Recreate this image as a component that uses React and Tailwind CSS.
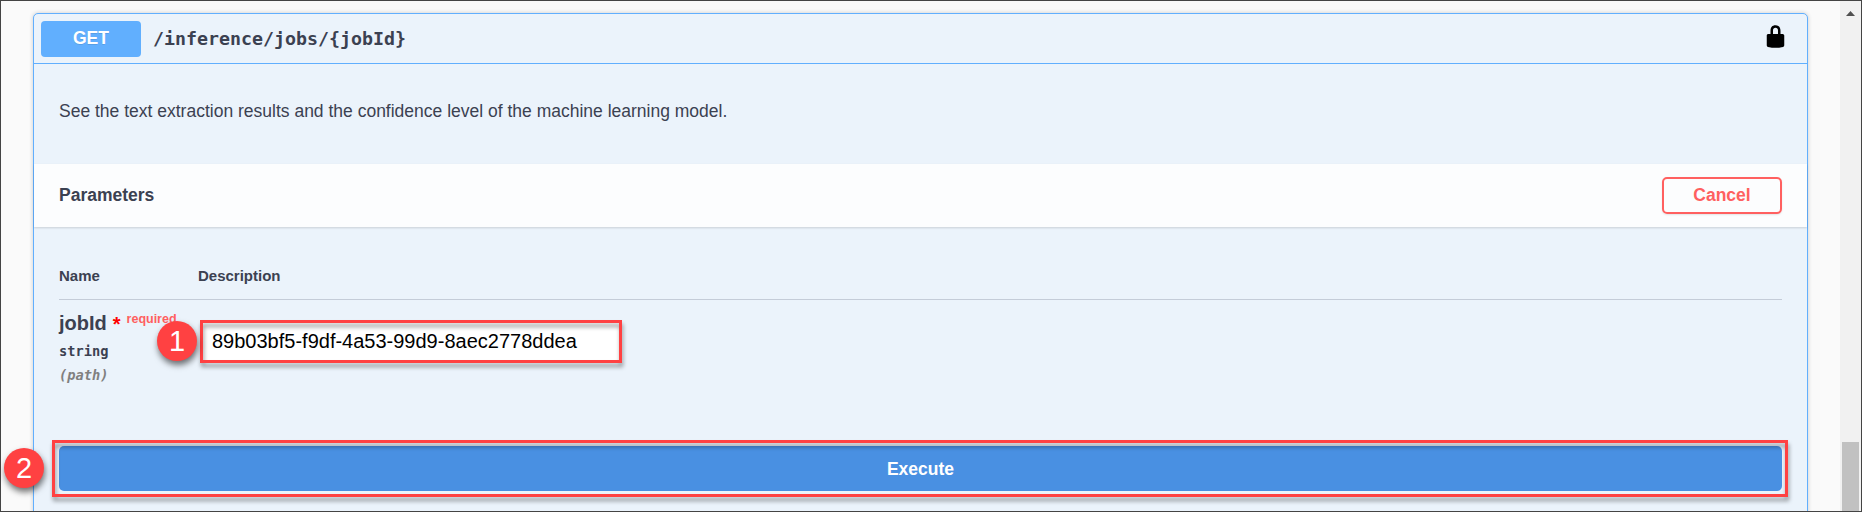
function LockIcon() {
  return (
    <svg className="block h-[25px] w-[25px]" viewBox="0 0 20 20" fill="#000">
      <path d="M15.8 8H14V5.6C14 2.703 12.665 1 10 1 7.334 1 6 2.703 6 5.6V8H4c-.553 0-1 .646-1 1.199V17c0 .549.428 1.139.951 1.307l1.197.387C5.672 18.861 6.55 19 7.1 19h5.8c.549 0 1.428-.139 1.951-.307l1.196-.387c.524-.167.953-.757.953-1.306V9.199C17 8.646 16.352 8 15.8 8zM12 8H8V5.199C8 3.754 8.797 3 10 3c1.203 0 2 .754 2 2.199V8z" />
    </svg>
  );
}

function Marker({ children, className }) {
  return (
    <div
      className={`absolute z-10 flex h-10 w-10 items-center justify-center rounded-full bg-[#ff4142] text-[29px] leading-none font-normal text-white shadow-[1px_4px_6px_rgba(0,0,0,0.55)] ${className}`}
    >
      {children}
    </div>
  );
}

function Highlight({ className }) {
  return (
    <div
      className={`pointer-events-none absolute border-[3px] border-[#ff4142] drop-shadow-[1px_4px_2px_rgba(0,0,0,0.4)] ${className}`}
    />
  );
}

function OperationHeader() {
  return (
    <header className="flex h-[50px] shrink-0 items-start border-b border-[#61affe] pl-[7px] pr-[19px]">
      <div className="mt-[7px] flex h-9 w-[100px] items-center justify-center rounded-[4px] bg-[#61affe] pb-[2px] text-[17.5px] font-bold text-white [text-shadow:0_1px_0_rgba(0,0,0,0.1)]">
        GET
      </div>
      <div className="mt-[12px] ml-[12px] grow font-['DejaVu_Sans_Mono',monospace] text-[18.27px] leading-[25px] font-bold text-[#3b4151]">
        /inference/jobs/&#123;jobId&#125;
      </div>
      <div className="mt-[10px]">
        <LockIcon />
      </div>
    </header>
  );
}

function Parameters() {
  return (
    <div className="flex flex-col px-[25px] pt-[36px]">
      <div className="flex h-[37px] border-b border-[#c4ccd8] text-[15px] leading-[25px] font-bold text-[#3b4151]">
        <div className="w-[139px]">Name</div>
        <div>Description</div>
      </div>
      <div className="flex h-[146px] text-[#3b4151]">
        <div className="w-[139px] shrink-0 pt-[9px]">
          <div className="flex h-[28px] text-[20px] leading-[28px] font-bold">
            <span>jobId</span>
            <span className="ml-[6px] text-[20px] leading-[31px] text-[#ff0000]">*</span>
            <span className="ml-[6px] text-[12.5px] leading-[20px] font-bold text-[#ff5f5f]">required</span>
          </div>
          <div className="mt-[4px] font-['DejaVu_Sans_Mono',monospace] text-[13.7px] leading-[20px] font-bold">string</div>
          <div className="mt-[4px] font-['DejaVu_Sans_Mono',monospace] text-[13.7px] leading-[20px] font-bold text-[#808080] italic">
            (path)
          </div>
        </div>
        <div className="relative mt-[20px] ml-[2px] flex h-[43px] w-[422px] items-center bg-white pb-[2px] pl-[12px] text-[20px] text-black">
          89b03bf5-f9df-4a53-99d9-8aec2778ddea
          <Highlight className="inset-0" />
          <Marker className="top-[1px] left-[-43px]">1</Marker>
        </div>
      </div>
      <div className="relative flex h-[45px] items-center justify-center rounded-[5px] bg-[#4990e2] text-[17.5px] font-bold text-white">
        <span className="pt-px">Execute</span>
        <Highlight className="-left-[7px] -right-[6px] -top-[6px] -bottom-[6px]" />
        <Marker className="top-[2px] left-[-55px]">2</Marker>
      </div>
    </div>
  );
}

function Scrollbar() {
  return (
    <div className="flex w-[21px] shrink-0 flex-col items-center justify-between bg-[#f1f1f1]">
      <svg className="mt-[10px] block h-[5px] w-[9px]" viewBox="0 0 9 5" fill="#505050">
        <path d="M0 5 4.5 0 9 5Z" />
      </svg>
      <div className="h-[69px] w-[17px] bg-[#c1c1c1]" />
    </div>
  );
}

export default function App() {
  return (
    <div className="flex h-[512px] w-[1862px] overflow-hidden border border-[#444444] bg-[#fafafa] font-['Liberation_Sans',Arial,sans-serif]">
      <main className="grow pt-3 pl-8">
        <section className="flex h-[520px] w-[1775px] flex-col rounded-[5px] border border-[#61affe] bg-[#ebf3fb] shadow-[0_0_4px_rgba(0,0,0,0.19)]">
          <OperationHeader />
          <p className="h-[100px] shrink-0 pt-[34px] pl-[25px] text-[17.5px] leading-[26px] text-[#3b4151]">
            See the text extraction results and the confidence level of the machine learning model.
          </p>
          <div className="flex h-[63px] shrink-0 items-center justify-between bg-[#fcfdfe] px-[25px] shadow-[0_1px_2px_rgba(0,0,0,0.15)]">
            <h4 className="text-[17.5px] font-bold text-[#3b4151]">Parameters</h4>
            <button className="flex h-[37px] w-[120px] items-center justify-center rounded-[5px] border-2 border-[#ff6060] text-[17.5px] font-bold text-[#ff6060] shadow-[0_1px_2px_rgba(0,0,0,0.1)]">
              Cancel
            </button>
          </div>
          <Parameters />
        </section>
      </main>
      <Scrollbar />
    </div>
  );
}
